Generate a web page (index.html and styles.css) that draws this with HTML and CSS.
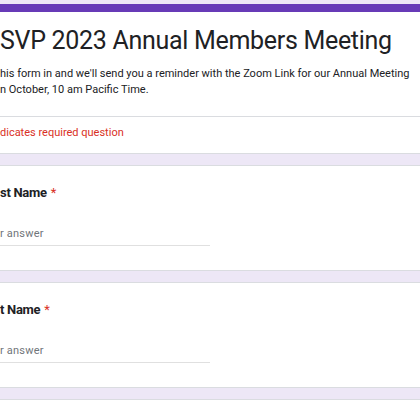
FILE: index.html
```html
<!DOCTYPE html>
<html lang="en">
<head>
<meta charset="utf-8">
<title>RSVP 2023 Annual Members Meeting</title>
<link rel="stylesheet" href="styles.css">
</head>
<body>
<div class="page">
  <div class="card header-card">
    <div class="header-main">
      <h1 class="title">SVP 2023 Annual Members Meeting</h1>
      <p class="desc">his form in and we'll send you a reminder with the Zoom Link for our Annual Meeting<br>n October, 10 am Pacific Time.</p>
    </div>
    <div class="required-note">dicates required question</div>
  </div>
  <div class="card question">
    <div class="q-title">st Name<span class="req">*</span></div>
    <div class="answer">r answer</div>
  </div>
  <div class="card question">
    <div class="q-title">t Name<span class="req">*</span></div>
    <div class="answer">r answer</div>
  </div>
  <div class="card question last"></div>
</div>
</body>
</html>
```
FILE: styles.css
```css
html, body {
  margin: 0;
  padding: 0;
  background: #ede7f6;
  overflow: hidden;
  height: 420px;
}
.page {
  display: flex;
  flex-direction: column;
  gap: 11px;
  padding-top: 4px;
  font-family: Roboto, "Liberation Sans", sans-serif;
  color: #202124;
}
.card {
  background: #fff;
  border-top: 1px solid #dadce0;
  border-bottom: 1px solid #dadce0;
}
.header-card {
  border-top: 8px solid #673ab7;
}
.header-main {
  padding: 11px 0 18px 0;
  border-bottom: 1px solid #dadce0;
}
.title {
  margin: 0 0 7px 0;
  font-size: 25px;
  line-height: 36px;
  font-weight: 400;
  letter-spacing: -0.3px;
  white-space: nowrap;
}
.desc {
  margin: 0;
  font-size: 11px;
  line-height: 16px;
  color: #202124;
  white-space: nowrap;
}
.required-note {
  padding: 8px 0 12px 0;
  font-size: 11px;
  line-height: 16px;
  color: #d93025;
}
.question {
  padding: 17px 0 24px 0;
}
.q-title {
  font-size: 13px;
  line-height: 20px;
  font-weight: 700;
  letter-spacing: -0.3px;
}
.req {
  margin-left: 4px;
  color: #d93025;
  font-weight: 400;
}
.answer {
  margin-top: 23px;
  width: 210px;
  padding-bottom: 3px;
  border-bottom: 1px solid #e0e0e0;
  font-size: 11px;
  line-height: 16px;
  letter-spacing: 0.2px;
  color: #70757a;
}
.last {
  height: 40px;
  padding: 0;
}
```
